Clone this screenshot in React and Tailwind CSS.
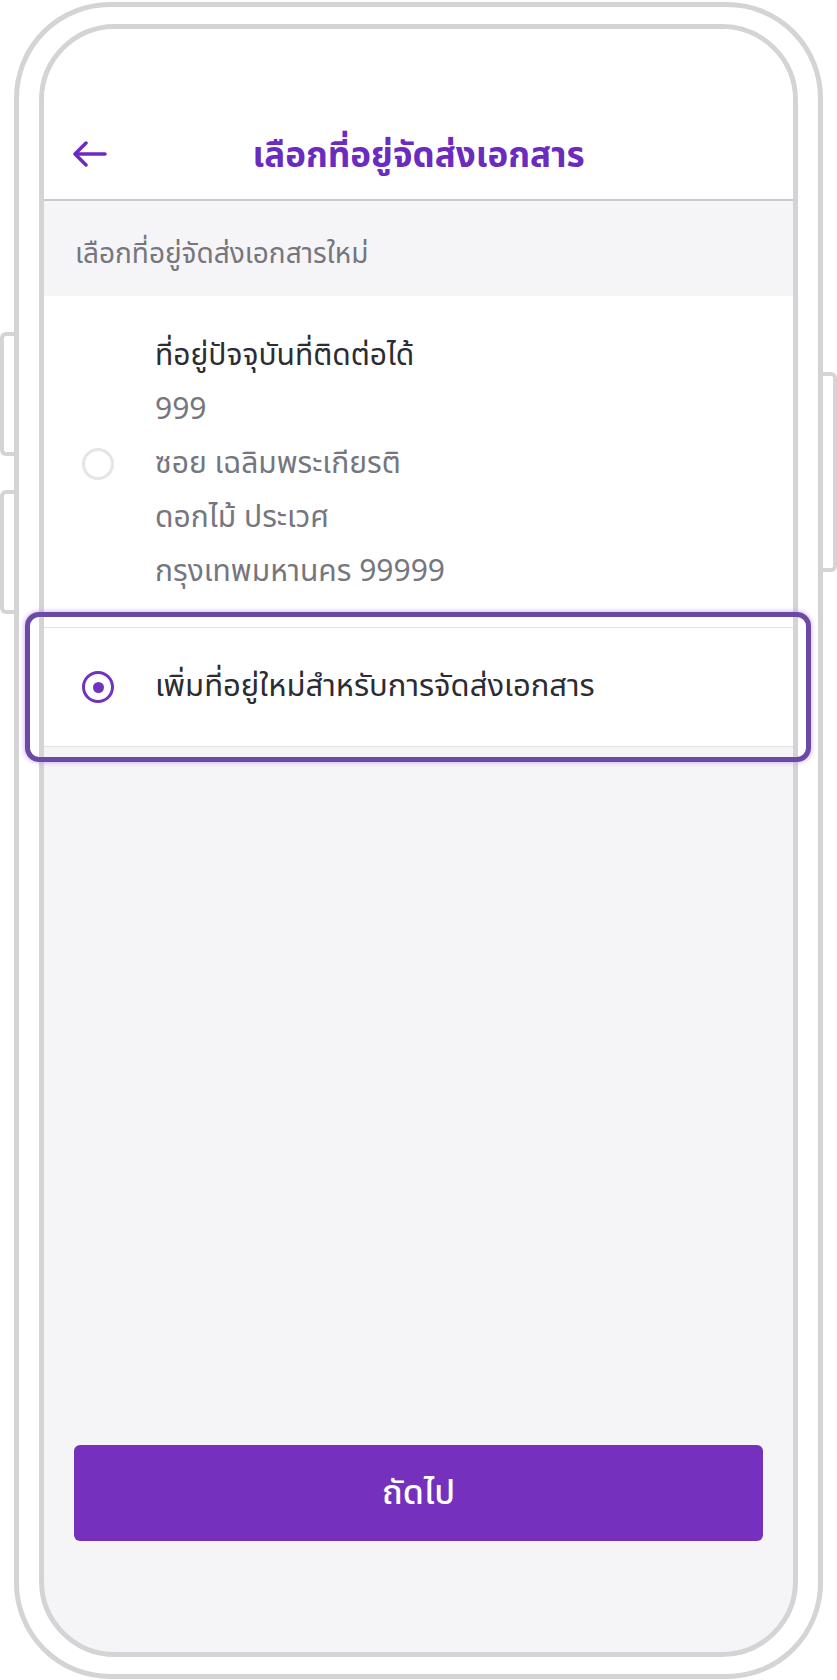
import React from 'react';

const Radio = ({ checked }) =>
  checked ? (
    <span className="flex h-[32px] w-[32px] shrink-0 items-center justify-center rounded-full border-[3.5px] border-[#7032c1]">
      <span className="h-[11px] w-[11px] rounded-full bg-[#7032c1]" />
    </span>
  ) : (
    <span className="h-[32px] w-[32px] shrink-0 rounded-full border-[3px] border-[#e4e4e9]" />
  );

const BackArrow = () => (
  <svg width="34" height="26" viewBox="0 0 34 26" fill="none" stroke="#6c2bbf" strokeWidth="3.5" strokeLinecap="round" strokeLinejoin="round">
    <path d="M32 13H3" />
    <path d="M13 2L2 13l11 11" />
  </svg>
);

const address = ['999', 'ซอย เฉลิมพระเกียรติ', 'ดอกไม้ ประเวศ', 'กรุงเทพมหานคร 99999'];

export default function App() {
  return (
    <div
      className="relative h-[1680px] w-[837px] bg-white pl-[14px] pt-[2px]"
      style={{ fontFamily: '"Noto Sans Thai", "Noto Sans", "Liberation Sans", sans-serif' }}
    >
      {/* side buttons */}
      <div className="absolute left-0 top-[332px] h-[124px] w-[18px] rounded-l-[6px] border-[4px] border-r-0 border-[#d4d4d6] bg-white" />
      <div className="absolute left-0 top-[490px] h-[124px] w-[18px] rounded-l-[6px] border-[4px] border-r-0 border-[#d4d4d6] bg-white" />
      <div className="absolute right-0 top-[372px] h-[200px] w-[19px] rounded-r-[6px] border-[4px] border-l-0 border-[#d4d4d6] bg-white" />

      {/* phone frame */}
      <div className="relative h-[1677px] w-[809px] rounded-[96px] border-[5px] border-[#d4d4d6] bg-white px-[20px] py-[17px]">
        <div className="flex h-full w-full flex-col overflow-hidden rounded-[76px] border-[5px] border-[#d4d4d6] bg-[#f5f5f7]">
          {/* header */}
          <div className="relative flex h-[170px] shrink-0 items-end justify-center bg-white pb-[22px]">
            <div className="absolute left-[29px] top-[112px]">
              <BackArrow />
            </div>
            <h1 className="text-[35px] font-bold leading-[40px] text-[#6c2bbf]">เลือกที่อยู่จัดส่งเอกสาร</h1>
          </div>
          <div className="h-[2px] shrink-0 bg-[#c9c9ce]" />

          {/* section label */}
          <div className="flex h-[95px] shrink-0 items-center px-[31px] pt-[12px] text-[28px] text-[#76767e]">
            เลือกที่อยู่จัดส่งเอกสารใหม่
          </div>

          {/* current address */}
          <div className="flex shrink-0 items-center gap-[41px] border-b border-[#e2e2e6] bg-white px-[38px] pb-[28px] pt-[33px]">
            <Radio checked={false} />
            <div className="flex flex-col text-[30px] leading-[54px] text-[#76767e]">
              <span className="text-[#2c2c33]">ที่อยู่ปัจจุบันที่ติดต่อได้</span>
              {address.map((line) => (
                <span key={line}>{line}</span>
              ))}
            </div>
          </div>

          {/* new address */}
          <div className="flex h-[119px] shrink-0 items-center gap-[41px] border-b border-[#e2e2e6] bg-white px-[38px]">
            <Radio checked />
            <span className="text-[31px] text-[#2c2c33]">เพิ่มที่อยู่ใหม่สำหรับการจัดส่งเอกสาร</span>
          </div>

          <div className="flex flex-1 flex-col justify-end px-[30px] pb-[111px]">
            <button className="flex h-[96px] w-full items-center justify-center rounded-[6px] bg-[#7531be] text-[34px] font-medium text-white">
              ถัดไป
            </button>
          </div>
        </div>
      </div>

      {/* selection highlight */}
      <div className="absolute left-[25px] top-[612px] h-[150px] w-[786px] rounded-[14px] border-[5px] border-[#6b4aa6] shadow-[0_0_4px_1px_rgba(190,140,240,0.6)]" />
    </div>
  );
}
